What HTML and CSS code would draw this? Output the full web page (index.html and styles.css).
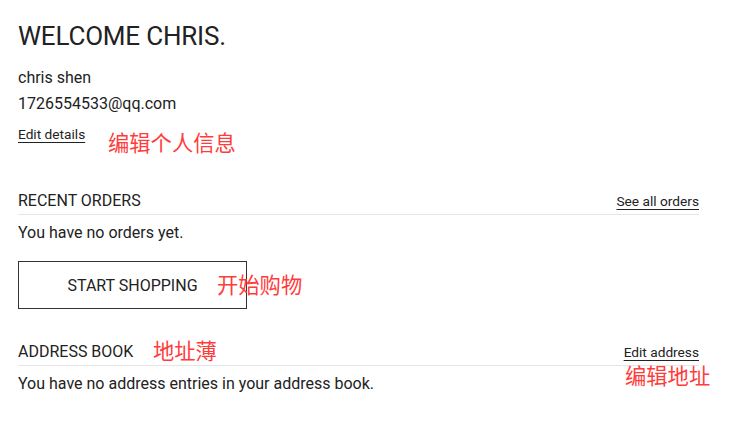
FILE: index.html
```html
<!DOCTYPE html>
<html lang="en">
<head>
  <meta charset="UTF-8" />
  <title>My Account</title>
  <link rel="stylesheet" href="styles.css">
</head>
<body>
  <div class="account">
    <h1 class="welcome">WELCOME CHRIS.</h1>
    <div class="info">chris shen</div>
    <div class="info">1726554533@qq.com</div>
    <div class="details">
      <a class="link" href="#">Edit details</a>
      <span class="note note-details">编辑个人信息</span>
    </div>

    <div class="section orders">
      <div class="section-head">
        <span class="section-title">RECENT ORDERS</span>
        <a class="link" href="#">See all orders</a>
      </div>
      <p class="empty">You have no orders yet.</p>
      <div class="shop">
        <button class="shop-btn">START SHOPPING</button>
        <span class="note note-shop">开始购物</span>
      </div>
    </div>

    <div class="section addresses">
      <div class="section-head">
        <span class="section-title">ADDRESS BOOK</span>
        <span class="note note-book">地址薄</span>
        <a class="link" href="#">Edit address</a>
        <span class="note note-address">编辑地址</span>
      </div>
      <p class="empty">You have no address entries in your address book.</p>
    </div>
  </div>
</body>
</html>
```

FILE: styles.css
```css
body { margin: 0; background: #fff; font-family: Roboto, "Noto Sans CJK SC", sans-serif; color: #222; }
.account { width: 681px; padding: 18px 0 0 18px; }
.welcome { margin: 0; font-size: 26px; font-weight: 400; line-height: 36px; letter-spacing: -0.2px; }
.info { font-size: 16px; line-height: 26px; }
.info:first-of-type { margin-top: 11px; }
.details { position: relative; margin-top: 7px; height: 30px; }
.link { color: #222; font-size: 13.7px; text-decoration: underline; text-underline-offset: 3px; }
.note { position: absolute; color: #ff3c3c; font-size: 21.3px; font-family: "Noto Sans CJK SC", sans-serif; line-height: 24px; white-space: nowrap; }
.note-details { left: 90px; top: 6px; }
.orders { margin-top: 37px; }
.addresses { margin-top: 33px; }
.section-head { position: relative; display: flex; justify-content: space-between; align-items: baseline; border-bottom: 1px solid #e6e6e6; padding-bottom: 3px; }
.section-title { font-size: 16px; line-height: 20px; }
.empty { margin: 8px 0 0; font-size: 16px; line-height: 20px; }
.shop { position: relative; margin-top: 18px; }
.shop-btn { width: 229px; height: 48px; background: #fff; border: 1px solid #333; color: #222; font-family: Roboto, sans-serif; font-size: 16px; padding: 0; }
.note-shop { left: 199px; top: 11px; }
.note-book { left: 135px; top: -4px; }
.note-address { left: 607px; top: 21px; }
```
